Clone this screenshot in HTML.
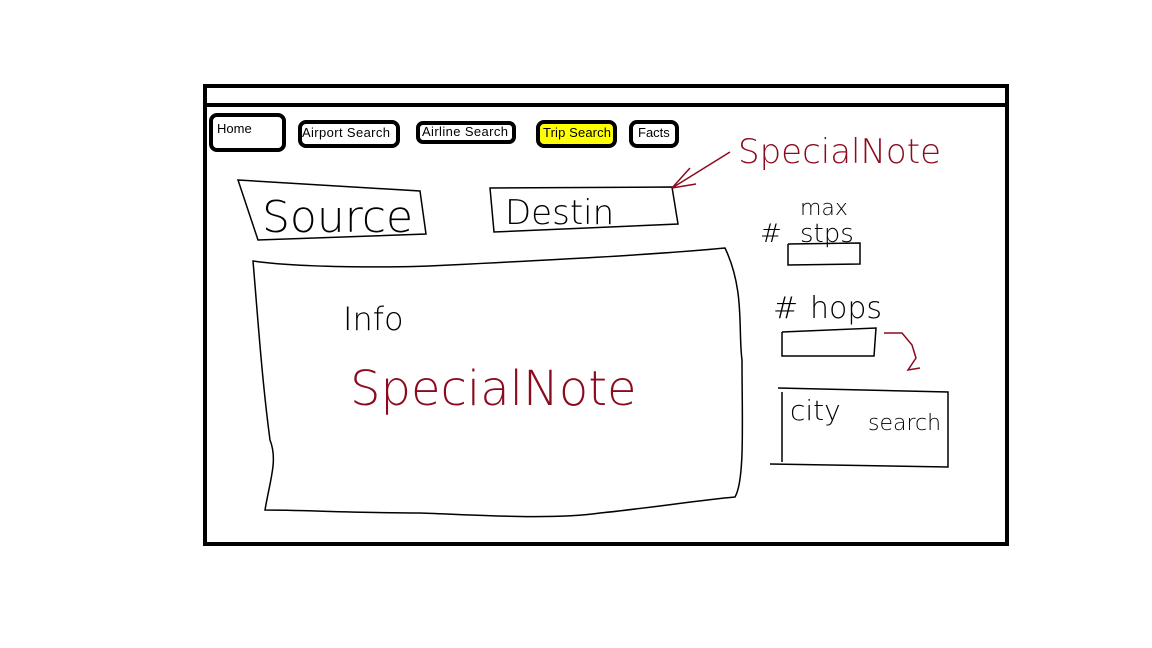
<!DOCTYPE html>
<html><head><style>
html,body{margin:0;padding:0;background:#fff;width:1152px;height:648px;overflow:hidden}
svg{display:block}
.b{font-family:"Liberation Sans",sans-serif;font-size:13px;fill:#000}
.h{font-family:"DejaVu Sans","Liberation Sans",sans-serif;font-weight:200;fill:#000}
.r{fill:#8b0a1e}
</style></head><body>
<svg width="1152" height="648" viewBox="0 0 1152 648" xmlns="http://www.w3.org/2000/svg">
<rect x="205" y="86" width="802" height="458" fill="none" stroke="#000" stroke-width="4"/>
<line x1="205" y1="105" x2="1007" y2="105" stroke="#000" stroke-width="4"/>
<g fill="none" stroke="#000" stroke-width="4">
<rect x="211" y="115" width="73" height="35" rx="6"/>
<rect x="300" y="122" width="98" height="24" rx="6"/>
<rect x="418" y="123" width="96" height="19" rx="5"/>
<rect x="538" y="122" width="77" height="24" rx="6" fill="#ffff00"/>
<rect x="631" y="122" width="46" height="24" rx="6"/>
</g>
<text class="b" x="217" y="133">Home</text>
<text class="b" x="302" y="137" textLength="88">Airport Search</text>
<text class="b" x="422" y="136" textLength="86">Airline Search</text>
<text class="b" x="543" y="137" textLength="68">Trip Search</text>
<text class="b" x="638" y="137">Facts</text>
<g fill="none" stroke="#000" stroke-width="1.5">
<polygon points="238,180 420,191 426,234 258,240"/>
<polygon points="490,188 672,187 678,224 494,232"/>
<path d="M253,261 C300,268 400,268 450,265 C550,260 650,255 725,248 C745,290 738,330 742,360 C742,420 745,480 735,497 C700,500 650,508 600,513 C550,520 480,515 420,513 C360,513 300,510 265,510 C270,480 278,460 270,440 C262,380 258,320 253,261 Z"/>
<polyline points="788,244 860,243 860,264 788,265 788,244"/>
<polyline points="782,332 876,328 874,356 782,356 782,332"/>
<polyline points="778,388 948,392 948,467 770,464"/>
<line x1="782" y1="392" x2="782" y2="462"/>
</g>
<g class="h">
<text x="262" y="232" font-size="44">Source</text>
<text x="505" y="224" font-size="34">Destin</text>
<text x="343" y="330" font-size="32">Info</text>
<text x="800" y="215" font-size="22">max</text>
<text x="760" y="242" font-size="26">#</text>
<text x="800" y="242" font-size="26">stps</text>
<text x="773" y="318" font-size="30">#</text>
<text x="810" y="318" font-size="30">hops</text>
<text x="790" y="420" font-size="28">city</text>
<text x="868" y="430" font-size="22">search</text>
</g>
<g class="h r">
<text x="738" y="163" font-size="34">SpecialNote</text>
<text x="350" y="405" font-size="48">SpecialNote</text>
</g>
<g fill="none" stroke="#8b0a1e" stroke-width="1.5">
<path d="M730,152 L672,188 M672,188 L690,168 M672,188 L696,184"/>
<path d="M884,333 L902,333 L912,345 L916,358 L908,370 L920,368"/>
</g>
</svg>
</body></html>
